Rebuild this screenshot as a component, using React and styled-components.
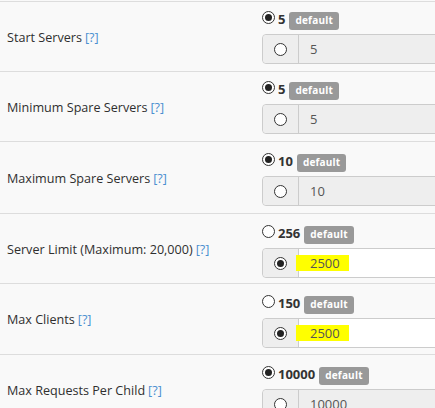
import React from "react";
import styled, { createGlobalStyle } from "styled-components";

const GlobalStyle = createGlobalStyle`
  html, body {
    margin: 0;
    padding: 0;
    background: #f9f9f9;
    overflow: hidden;
  }
  body {
    font-family: "Open Sans", "Liberation Sans", sans-serif;
    font-size: 13px;
    color: #333;
  }
`;

const rows = [
  { label: "Start Servers", def: "5", value: "5", custom: false, h: 70, top: 8 },
  { label: "Minimum Spare Servers", def: "5", value: "5", custom: false, h: 70, top: 8 },
  { label: "Maximum Spare Servers", def: "10", value: "10", custom: false, h: 72, top: 10 },
  { label: "Server Limit (Maximum: 20,000)", def: "256", value: "2500", custom: true, h: 70, top: 10 },
  { label: "Max Clients", def: "150", value: "2500", custom: true, h: 71, top: 10 },
  { label: "Max Requests Per Child", def: "10000", value: "10000", custom: false, h: 70, top: 10 },
];

const Table = styled.div`
  width: 435px;
  padding-top: 1px;
`;

const Row = styled.div`
  display: grid;
  grid-template-columns: 262px 1fr;
  height: ${(p) => p.$h}px;
  box-sizing: border-box;
  border-top: 1px solid #dddddd;
`;

const LabelCell = styled.div`
  display: flex;
  align-items: center;
  padding-left: 7px;
  padding-top: 1px;
  font-size: 12.6px;
  color: #2f2f2f;
`;

const Help = styled.a`
  color: #4a8fd0;
  margin-left: 3px;
  text-decoration: none;
`;

const FieldCell = styled.div`
  padding-top: ${(p) => p.$top}px;
  overflow: hidden;
`;

const RadioLine = styled.div`
  display: flex;
  align-items: baseline;
  height: 20px;
`;

const Radio = styled.span`
  position: relative;
  display: inline-block;
  flex: none;
  width: 13px;
  height: 13px;
  box-sizing: border-box;
  border-radius: 50%;
  border: 1px solid #333;
  background: #fff;
  margin-bottom: 2px;

  &::after {
    content: "";
    position: absolute;
    left: 2px;
    top: 2px;
    width: 7px;
    height: 7px;
    border-radius: 50%;
    background: #222;
    display: ${(p) => (p.$checked ? "block" : "none")};
  }
`;

const DefValue = styled.b`
  margin-left: 3px;
  font-weight: 700;
  color: #333;
`;

const Badge = styled.span`
  margin-left: 4px;
  padding: 2px 6px 3px;
  border-radius: 3px;
  background: #999999;
  color: #fff;
  font-size: 10px;
  font-weight: 700;
  line-height: 13px;
  letter-spacing: 0.2px;
`;

const InputGroup = styled.div`
  display: flex;
  margin-top: 4px;
  width: 260px;
  height: 30px;
  box-sizing: border-box;
  border: 1px solid #cccccc;
  border-radius: 4px;
`;

const Addon = styled.div`
  flex: none;
  width: 35px;
  display: flex;
  align-items: center;
  justify-content: center;
  background: #eeeeee;
  border-right: 1px solid #cccccc;
  border-radius: 4px 0 0 4px;

  ${Radio} {
    margin-bottom: 0;
  }
`;

const Input = styled.div`
  flex: 1;
  display: flex;
  align-items: center;
  padding-left: 11px;
  background: ${(p) => (p.$active ? "#ffffff" : "#eeeeee")};
  color: #555;
`;

const Highlight = styled.span`
  background: #ffff00;
  margin-left: -14px;
  padding: 0 9px 0 14px;
  line-height: 16px;
  color: #555;
`;

export default function App() {
  return (
    <>
      <GlobalStyle />
      <Table>
        {rows.map((r) => (
          <Row key={r.label} $h={r.h}>
            <LabelCell>
              {r.label}
              <Help href="#">[?]</Help>
            </LabelCell>
            <FieldCell $top={r.top}>
              <RadioLine>
                <Radio $checked={!r.custom} />
                <DefValue>{r.def}</DefValue>
                <Badge>default</Badge>
              </RadioLine>
              <InputGroup>
                <Addon>
                  <Radio $checked={r.custom} />
                </Addon>
                <Input $active={r.custom}>
                  {r.custom ? <Highlight>{r.value}</Highlight> : r.value}
                </Input>
              </InputGroup>
            </FieldCell>
          </Row>
        ))}
      </Table>
    </>
  );
}
